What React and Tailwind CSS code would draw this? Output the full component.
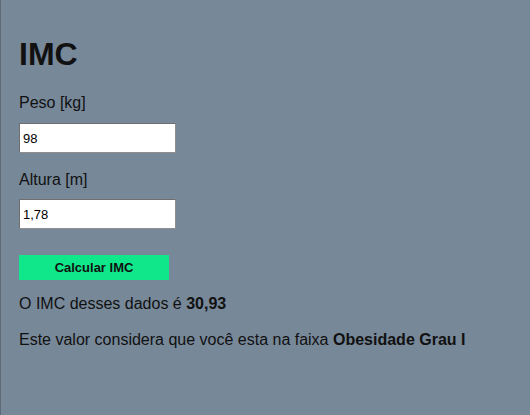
export default function App() {
  return (
    <div className="min-h-[415px] w-full bg-[#778899] border-l border-[#5e6a76] pl-[18px] pt-[36px] text-[#111] font-['Liberation_Sans',Arial,sans-serif]">
      <h1 className="text-[32px] leading-[37px] font-bold">IMC</h1>
      <div className="mt-[21px] flex flex-col">
        <label className="text-base leading-[18px]">Peso [kg]</label>
        <input
          defaultValue="98"
          className="mt-[11px] w-[157px] h-[30px] bg-white border border-[#8f8f8f] border-t-[#6f6f6f] border-l-[#6f6f6f] px-[3px] text-[13px] text-black outline-none"
        />
        <label className="mt-[18px] text-base leading-[18px]">Altura [m]</label>
        <input
          defaultValue="1,78"
          className="mt-[10px] w-[157px] h-[30px] bg-white border border-[#8f8f8f] border-t-[#6f6f6f] border-l-[#6f6f6f] px-[3px] text-[13px] text-black outline-none"
        />
        <button className="mt-[26px] w-[150px] h-[25px] bg-[#10e68a] text-[13px] font-bold text-[#111]">
          Calcular IMC
        </button>
        <p className="mt-[15px] text-base leading-[18px]">
          O IMC desses dados é <b>30,93</b>
        </p>
        <p className="mt-[18px] text-base leading-[18px]">
          Este valor considera que você esta na faixa <b>Obesidade Grau I</b>
        </p>
      </div>
    </div>
  )
}
